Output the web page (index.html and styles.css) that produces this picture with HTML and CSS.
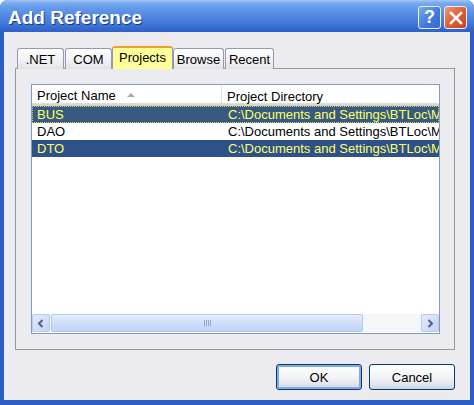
FILE: index.html
```html
<!DOCTYPE html>
<html>
<head>
<meta charset="utf-8">
<link rel="stylesheet" href="styles.css">
</head>
<body>
<div class="window">
  <div class="titlebar">
    <span class="title">Add Reference</span>
    <div class="caption-btns">
      <div class="cap-btn help">?</div>
      <div class="cap-btn close">
        <svg width="14" height="14" viewBox="0 0 14 14"><path d="M2 2 L12 12 M12 2 L2 12" stroke="#fff" stroke-width="2.6" stroke-linecap="square"/></svg>
      </div>
    </div>
  </div>
  <div class="client">
    <div class="tabstrip">
      <div class="tab t-net">.NET</div>
      <div class="tab t-com">COM</div>
      <div class="tab t-proj active">Projects</div>
      <div class="tab t-browse">Browse</div>
      <div class="tab t-recent">Recent</div>
    </div>
    <div class="panel">
      <div class="listview">
        <div class="header">
          <div class="hcol c-name">Project Name <span class="sort"></span></div>
          <div class="hcol c-dir">Project Directory</div>
        </div>
        <div class="rows">
          <div class="row sel focus"><span class="c-name">BUS</span><span class="c-dir">C:\Documents and Settings\BTLoc\My</span></div>
          <div class="row"><span class="c-name">DAO</span><span class="c-dir">C:\Documents and Settings\BTLoc\My</span></div>
          <div class="row sel"><span class="c-name">DTO</span><span class="c-dir">C:\Documents and Settings\BTLoc\My</span></div>
        </div>
        <div class="hscroll">
          <div class="sb-btn">
            <svg width="8" height="9" viewBox="0 0 8 9"><path d="M5.5 1 L2 4.5 L5.5 8" stroke="#4d6185" stroke-width="2" fill="none"/></svg>
          </div>
          <div class="track">
            <div class="thumb"><span class="grip"></span></div>
          </div>
          <div class="sb-btn">
            <svg width="8" height="9" viewBox="0 0 8 9"><path d="M2.5 1 L6 4.5 L2.5 8" stroke="#4d6185" stroke-width="2" fill="none"/></svg>
          </div>
        </div>
      </div>
    </div>
    <div class="buttons">
      <div class="btn default">OK</div>
      <div class="btn">Cancel</div>
    </div>
  </div>
</div>
</body>
</html>
```
FILE: styles.css
```css
html, body {
  margin: 0;
  padding: 0;
  background: #ffffff;
}
.window {
  width: 474px;
  height: 405px;
  box-sizing: border-box;
  background: #2c5cc6;
  border-radius: 8px 8px 0 0;
  display: flex;
  flex-direction: column;
  font-family: "Liberation Sans", Arial, sans-serif;
  font-size: 13px;
  color: #000;
}
.titlebar {
  height: 32px;
  flex: none;
  border-radius: 8px 8px 0 0;
  background: linear-gradient(to bottom, #a6c6f4 0px, #78aaee 3px, #649aea 8px, #5189e2 16px, #4076d9 24px, #2f62ca 31px);
  display: flex;
  align-items: center;
  justify-content: space-between;
  padding: 0 7px 0 8px;
  box-sizing: border-box;
}
.title {
  color: #fff;
  font-weight: bold;
  font-size: 19px;
  text-shadow: 1px 1px 0 #1a3a80;
  margin-top: 3px;
}
.caption-btns {
  display: flex;
  gap: 3px;
  margin-top: 3px;
}
.cap-btn {
  width: 23px;
  height: 23px;
  box-sizing: border-box;
  border: 1px solid #e8eefc;
  border-radius: 3px;
  display: flex;
  align-items: center;
  justify-content: center;
  color: #fff;
  font-weight: bold;
  font-size: 18px;
}
.help {
  background: linear-gradient(135deg, #7aa9ee, #3f78dc 60%, #3568cc);
}
.close {
  background: linear-gradient(135deg, #ee9a7a, #dc5a30 55%, #c8461c);
}
.client {
  flex: 1;
  margin: 0 4px 5px 4px;
  background: #ecebef;
  padding: 14px 15px 0 11px;
  display: flex;
  flex-direction: column;
}
.tabstrip {
  display: flex;
  align-items: flex-end;
  padding-left: 2px;
  height: 23px;
  margin-bottom: -1px;
  position: relative;
  z-index: 1;
}
.tab {
  height: 21px;
  box-sizing: border-box;
  border: 1px solid #919bb0;
  border-bottom: none;
  border-radius: 3px 3px 0 0;
  background: linear-gradient(to bottom, #ffffff, #f3f3f6 50%, #e2e3ea);
  display: flex;
  align-items: center;
  justify-content: center;
  font-size: 13px;
  padding-top: 1px;
}
.t-net { width: 47px; }
.t-com { width: 47px; margin-left: 1px; }
.t-proj { width: 61px; }
.t-browse { width: 51px; margin-left: 0; }
.t-recent { width: 49px; margin-left: 1px; }
.tab.active {
  height: 23px;
  background: #ffff99;
  border-top: 2px solid #f0a030;
  border-color: #f0a030 #919bb0 #919bb0 #919bb0;
  align-items: flex-start;
  padding-top: 2px;
}
.panel {
  height: 282px;
  box-sizing: border-box;
  border: 1px solid #919b9c;
  background: #ecebef;
  padding: 15px 14px 15px 15px;
  display: flex;
}
.listview {
  flex: 1;
  border: 1px solid #7f9db9;
  background: #fff;
  display: flex;
  flex-direction: column;
  overflow: hidden;
}
.header {
  height: 21px;
  flex: none;
  display: flex;
  background: linear-gradient(to bottom, #ffffff 0, #ffffff 18px, #e2e1d9 18px, #d0cfc6 21px);
}
.hcol {
  height: 19px;
  display: flex;
  align-items: center;
  padding-top: 3px;
  box-sizing: border-box;
}
.header .c-name {
  width: 190px;
  padding-left: 5px;
  border-right: 1px solid #e0dfe3;
  margin-top: 1px;
  height: 17px;
  padding-top: 2px;
}
.header .c-dir {
  padding-left: 5px;
}
.sort {
  display: inline-block;
  width: 0;
  height: 0;
  border-left: 4px solid transparent;
  border-right: 4px solid transparent;
  border-bottom: 4px solid #aca899;
  margin-left: 11px;
  margin-bottom: 2px;
}
.rows {
  flex: 1;
}
.row {
  height: 17px;
  display: flex;
  align-items: center;
  white-space: nowrap;
  box-sizing: border-box;
}
.row .c-name {
  width: 191px;
  flex: none;
  padding-left: 5px;
  box-sizing: border-box;
}
.row .c-dir {
  padding-left: 5px;
}
.row.sel {
  background: #2f5189;
  color: #ffff66;
}
.row.focus {
  background: #385a80;
  outline: 1px dotted #d8d060;
  outline-offset: -1px;
}
.hscroll {
  height: 18px;
  flex: none;
  display: flex;
  background: #f5f6f9;
  margin-bottom: 1px;
}
.sb-btn {
  width: 18px;
  height: 18px;
  box-sizing: border-box;
  border: 1px solid #b9c9ef;
  border-radius: 2px;
  background: linear-gradient(135deg, #e4ebfb, #c4d3f5);
  display: flex;
  align-items: center;
  justify-content: center;
}
.track {
  flex: 1;
  display: flex;
  padding: 0 56px 0 1px;
}
.thumb {
  width: 312px;
  height: 18px;
  box-sizing: border-box;
  border: 1px solid #b5c7ef;
  border-radius: 2px;
  background: linear-gradient(to bottom, #e6eefc, #cddbf8 60%, #c0d2f6);
  display: flex;
  align-items: center;
  justify-content: center;
}
.grip {
  width: 7px;
  height: 6px;
  background: repeating-linear-gradient(to right, #8ea6d6 0, #8ea6d6 1px, transparent 1px, transparent 2px);
}
.buttons {
  display: flex;
  justify-content: flex-end;
  gap: 7px;
  margin-top: 14px;
  padding-right: 0;
}
.btn {
  width: 86px;
  height: 26px;
  box-sizing: border-box;
  border: 1px solid #003c74;
  border-radius: 3px;
  background: linear-gradient(to bottom, #ffffff, #f2f3f7 55%, #dde2ec 85%, #c8cfe0);
  display: flex;
  align-items: center;
  justify-content: center;
  font-size: 13px;
}
.btn.default {
  box-shadow: inset 0 0 0 2px #84a8e8;
}
```
